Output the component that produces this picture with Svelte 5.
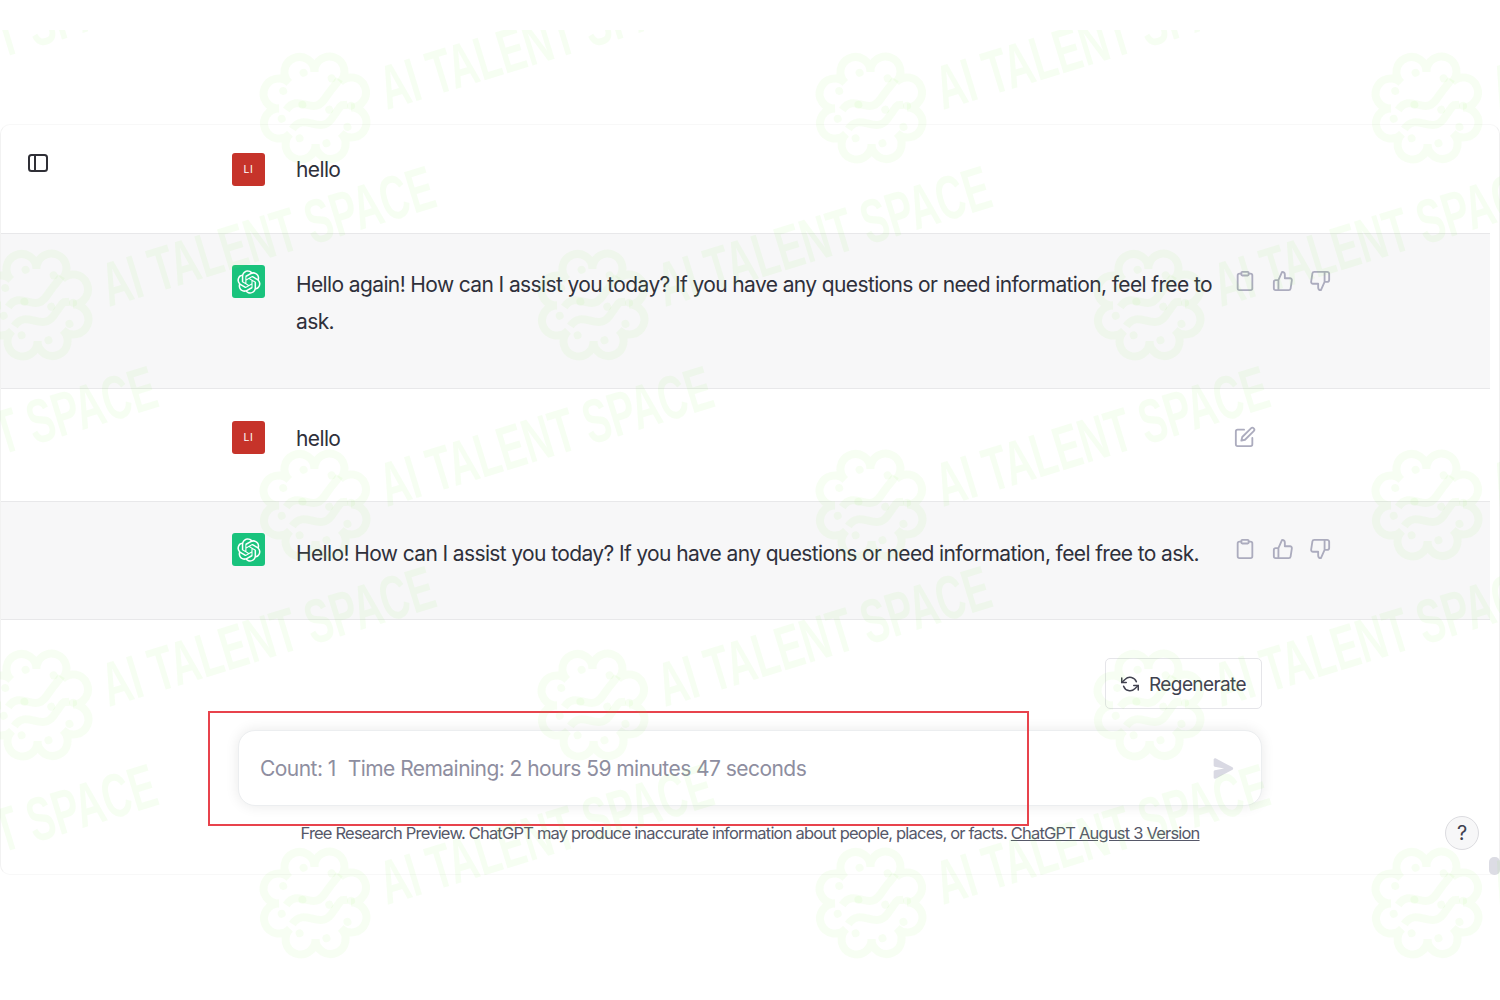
<script>
  const logo = "M37.5324 16.8707C37.9808 15.5241 38.1363 14.0974 37.9886 12.6859C37.8409 11.2744 37.3934 9.91076 36.676 8.68622C35.6126 6.83404 33.9882 5.3676 32.0373 4.4985C30.0864 3.62941 27.9098 3.40259 25.8215 3.85078C24.8796 2.7893 23.7219 1.94125 22.4257 1.36341C21.1295 0.785575 19.7249 0.491269 18.3058 0.500197C16.1708 0.495044 14.0893 1.16803 12.3614 2.42214C10.6335 3.67624 9.34853 5.44666 8.6917 7.47815C7.30085 7.76286 5.98686 8.3414 4.8377 9.17505C3.68854 10.0087 2.73073 11.0782 2.02839 12.312C0.956464 14.1591 0.498905 16.2988 0.721698 18.4228C0.944492 20.5467 1.83612 22.5449 3.268 24.1293C2.81966 25.4759 2.66413 26.9026 2.81182 28.3141C2.95951 29.7256 3.40701 31.0892 4.12437 32.3138C5.18791 34.1659 6.8123 35.6322 8.76321 36.5013C10.7141 37.3704 12.8907 37.5973 14.9789 37.1492C15.9208 38.2107 17.0786 39.0587 18.3747 39.6366C19.6709 40.2144 21.0755 40.5087 22.4946 40.4998C24.6307 40.5054 26.7133 39.8321 28.4418 38.5772C30.1704 37.3223 31.4556 35.5506 32.1119 33.5179C33.5027 33.2332 34.8167 32.6547 35.9659 31.821C37.115 30.9874 38.0728 29.9178 38.7752 28.684C39.8458 26.8371 40.3023 24.6979 40.0789 22.5748C39.8556 20.4517 38.9639 18.4544 37.5324 16.8707ZM22.4978 37.8849C20.7443 37.8874 19.0459 37.2733 17.6994 36.1501C17.7601 36.117 17.8666 36.0586 17.936 36.0161L25.9004 31.4156C26.1003 31.3019 26.2663 31.137 26.3813 30.9378C26.4964 30.7386 26.5563 30.5124 26.5549 30.2825V19.0542L29.9213 20.998C29.9389 21.0068 29.9541 21.0198 29.9656 21.0359C29.977 21.052 29.9842 21.0707 29.9867 21.0902V30.3889C29.9842 32.375 29.1946 34.2791 27.7909 35.6841C26.3872 37.0892 24.4838 37.8806 22.4978 37.8849ZM6.39227 31.0064C5.51397 29.4888 5.19742 27.7107 5.49804 25.9832C5.55718 26.0187 5.66048 26.0818 5.73461 26.1244L13.699 30.7248C13.8975 30.8408 14.1233 30.902 14.3532 30.902C14.583 30.902 14.8088 30.8408 15.0073 30.7248L24.731 25.1103V28.9979C24.7321 29.0177 24.7283 29.0376 24.7199 29.0556C24.7115 29.0736 24.6988 29.0893 24.6829 29.1012L16.6317 33.7497C14.9096 34.7416 12.8643 35.0097 10.9447 34.4954C9.02506 33.9811 7.38785 32.7263 6.39227 31.0064ZM4.29707 13.6194C5.17156 12.0998 6.55279 10.9364 8.19885 10.3327C8.19885 10.4013 8.19491 10.5228 8.19491 10.6071V19.808C8.19351 20.0378 8.25334 20.2638 8.36823 20.4629C8.48312 20.6619 8.64893 20.8267 8.84863 20.9404L18.5723 26.5542L15.206 28.4979C15.1894 28.5089 15.1703 28.5155 15.1505 28.5173C15.1307 28.5191 15.1107 28.516 15.0924 28.5082L7.04046 23.8557C5.32135 22.8601 4.06716 21.2235 3.55289 19.3046C3.03862 17.3858 3.30624 15.3413 4.29707 13.6194ZM31.955 20.0556L22.2312 14.4411L25.5976 12.4981C25.6142 12.4872 25.6333 12.4805 25.6531 12.4787C25.6729 12.4769 25.6928 12.4801 25.7111 12.4879L33.7631 17.1364C34.9967 17.849 36.0017 18.8982 36.6606 20.1613C37.3194 21.4244 37.6047 22.849 37.4832 24.2684C37.3617 25.6878 36.8382 27.0432 35.9743 28.1759C35.1103 29.3086 33.9415 30.1717 32.6047 30.6641C32.6047 30.5947 32.6047 30.4733 32.6047 30.3889V21.188C32.6066 20.9586 32.5474 20.7328 32.4332 20.5338C32.319 20.3348 32.154 20.1698 31.955 20.0556ZM35.3055 15.0128C35.2464 14.9765 35.1431 14.9142 35.069 14.8717L27.1045 10.2712C26.906 10.1554 26.6803 10.0943 26.4504 10.0943C26.2206 10.0943 25.9948 10.1554 25.7963 10.2712L16.0726 15.8858V11.9982C16.0715 11.9783 16.0753 11.9585 16.0837 11.9405C16.0921 11.9225 16.1048 11.9068 16.1207 11.8949L24.1719 7.25025C25.4053 6.53903 26.8158 6.19376 28.2383 6.25482C29.6608 6.31589 31.0364 6.78077 32.2044 7.59508C33.3723 8.40939 34.2842 9.53945 34.8334 10.8531C35.3826 12.1667 35.5464 13.6095 35.3055 15.0128ZM14.2424 21.9419L10.8752 19.9981C10.8576 19.9893 10.8423 19.9763 10.8309 19.9602C10.8195 19.9441 10.8122 19.9254 10.8098 19.9058V10.6071C10.8107 9.18295 11.2173 7.78848 11.9819 6.58696C12.7466 5.38544 13.8377 4.42659 15.1275 3.82264C16.4173 3.21869 17.8524 2.99464 19.2649 3.1767C20.6775 3.35876 22.0089 3.93941 23.1034 4.85067C23.0427 4.88379 22.937 4.94215 22.8668 4.98473L14.9024 9.58517C14.7025 9.69878 14.5366 9.86356 14.4215 10.0626C14.3065 10.2616 14.2466 10.4877 14.2479 10.7175L14.2424 21.9419ZM16.071 17.9991L20.4018 15.4978L24.7325 17.9975V22.9985L20.4018 25.4983L16.071 22.9985V17.9991Z";

  const messages = [
    { role: "user", text: "hello", cls: "first" },
    { role: "bot", text: "Hello again! How can I assist you today? If you have any questions or need information, feel free to ask.", cls: "second" },
    { role: "user", text: "hello", cls: "third", edit: true },
    { role: "bot", text: "Hello! How can I assist you today? If you have any questions or need information, feel free to ask.", cls: "fourth" }
  ];

  // watermark rows, one stamp every 556px
  const rows = [
    { y: 108, x: -241 },
    { y: 305, x: 37 },
    { y: 505, x: -241 },
    { y: 705, x: 37 },
    { y: 903, x: -241 }
  ];
  const stamps = rows.flatMap((r) =>
    [0, 1, 2, 3].map((i) => ({ x: r.x + i * 556, y: r.y }))
  );

  // lobed outline of the brain mark
  function lobes() {
    const n = 8;
    let d = "";
    for (let i = 0; i <= n; i++) {
      const a = (i / n) * Math.PI * 2 + 0.3;
      const x = (Math.cos(a) * 36).toFixed(1);
      const y = (Math.sin(a) * 36).toFixed(1);
      d += i === 0 ? `M${x} ${y}` : `A15 15 0 1 1 ${x} ${y}`;
    }
    return d + "Z";
  }
  const outline = lobes();
  const dots = [
    [-25, -26], [0, -37], [25, -23], [-35, 0], [-11, -7], [13, 6], [35, 9], [-24, 24], [0, 37], [25, 28]
  ];
</script>

<div class="page">
  <main class="panel">
    {#each messages as m}
      <section class="row {m.role} {m.cls}">
        <div class="inner">
          {#if m.role === "user"}
            <div class="avatar red">LI</div>
          {:else}
            <div class="avatar green">
              <svg viewBox="0 0 41 41" width="24" height="24"><path d={logo} fill="#fff" /></svg>
            </div>
          {/if}
          <p class="text">{m.text}</p>
          <div class="actions">
            {#if m.role === "bot"}
              <svg viewBox="0 0 24 24" class="ico"><path d="M16 4h2a2 2 0 0 1 2 2v14a2 2 0 0 1-2 2H6a2 2 0 0 1-2-2V6a2 2 0 0 1 2-2h2" /><rect x="8" y="2" width="8" height="4" rx="1" /></svg>
              <svg viewBox="0 0 24 24" class="ico"><path d="M14 9V5a3 3 0 0 0-3-3l-4 9v11h11.28a2 2 0 0 0 2-1.7l1.38-9a2 2 0 0 0-2-2.3zM7 22H4a2 2 0 0 1-2-2v-7a2 2 0 0 1 2-2h3" /></svg>
              <svg viewBox="0 0 24 24" class="ico"><path d="M10 15v4a3 3 0 0 0 3 3l4-9V2H5.72a2 2 0 0 0-2 1.7l-1.38 9a2 2 0 0 0 2 2.3zm7-13h2.67A2.31 2.31 0 0 1 22 4v7a2.31 2.31 0 0 1-2.33 2H17" /></svg>
            {:else if m.edit}
              <svg viewBox="0 0 24 24" class="ico"><path d="M11 4H4a2 2 0 0 0-2 2v14a2 2 0 0 0 2 2h14a2 2 0 0 0 2-2v-7" /><path d="M18.5 2.5a2.121 2.121 0 0 1 3 3L12 15l-4 1 1-4 9.5-9.5z" /></svg>
            {/if}
          </div>
        </div>
      </section>
    {/each}

    <div class="composer">
      <button class="regen">
        <svg viewBox="0 0 24 24" width="18" height="18"><polyline points="1 4 1 10 7 10" /><polyline points="23 20 23 14 17 14" /><path d="M20.49 9A9 9 0 0 0 5.64 5.64L1 10m22 4l-4.64 4.36A9 9 0 0 1 3.51 15" /></svg>
        <span>Regenerate</span>
      </button>
      <div class="input">
        <span class="count">Count: 1</span>
        <span>Time Remaining: 2 hours 59 minutes 47 seconds</span>
        <svg class="send" viewBox="0 0 16 16" width="21" height="21"><path d="M.5 1.163A1 1 0 0 1 1.97.28l12.868 6.837a1 1 0 0 1 0 1.766L1.969 15.72A1 1 0 0 1 .5 14.836V10.33a1 1 0 0 1 .816-.983L8.5 8 1.316 6.653A1 1 0 0 1 .5 5.67V1.163Z" /></svg>
      </div>
      <p class="note">Free Research Preview. ChatGPT may produce inaccurate information about people, places, or facts. <a href="#top">ChatGPT August 3 Version</a></p>
    </div>

    <button class="toggle" aria-label="Toggle sidebar">
      <svg viewBox="0 0 20 18" width="20" height="18"><rect x="1" y="1" width="18" height="16" rx="2.5" /><line x1="7" y1="1" x2="7" y2="17" /></svg>
    </button>
    <button class="help">?</button>
  </main>

  <div class="highlight"></div>
  <div class="thumb"></div>

  <svg class="marks" width="1500" height="970" viewBox="0 30 1500 970">
    {#each stamps as s}
      <g transform="translate({s.x} {s.y})">
        <g transform="rotate(-18)">
          <path d={outline} class="brain" />
          <path d="M-28 -7C-11 -20 -5 7 11 -5S28 -16 32 -20M-28 13C-11 0 -4 28 13 15S24 6 32 7" class="brain" />
          {#each dots as [cx, cy]}
            <circle {cx} {cy} r="4" class="dot" />
          {/each}
        </g>
        <text class="wm" x="72" y="2" textLength="345" lengthAdjust="spacingAndGlyphs" transform="rotate(-17 72 2)">AI TALENT SPACE</text>
      </g>
    {/each}
  </svg>
</div>

<style>
  :global(body) {
    margin: 0;
    background: #fff;
    overflow: hidden;
  }

  .page {
    position: relative;
    width: 1500px;
    height: 1000px;
    padding-top: 124px;
    box-sizing: border-box;
    font-family: Inter, "Liberation Sans", sans-serif;
    color: #2f303b;
  }

  .panel {
    position: relative;
    height: 751px;
    box-sizing: border-box;
    border: 1px solid #f8f8f8;
    border-left-color: #f2f2f2;
    border-right-color: #f0f0f0;
    border-radius: 10px;
    background: #fff;
  }

  .row {
    width: 1489px;
    box-sizing: border-box;
    border-bottom: 1px solid #e8e8ea;
  }

  .row.bot {
    background: #f7f7f8;
  }

  .first { height: 109px; padding-top: 28px; }
  .second { height: 155px; padding-top: 31px; }
  .third { height: 113px; padding-top: 32px; }
  .fourth { height: 118px; padding-top: 31px; }

  .first .text { margin-top: -2px; }
  .second .text { margin-top: 1px; }
  .third .text { margin-top: -1px; }
  .fourth .text { margin-top: 2px; }

  .inner {
    display: flex;
    align-items: flex-start;
    margin-left: 231px;
  }

  .avatar {
    flex: none;
    width: 33px;
    height: 33px;
    display: flex;
    align-items: center;
    justify-content: center;
    border-radius: 3px;
    color: #fff;
    font-size: 10.5px;
    letter-spacing: 0.5px;
  }

  .red { background: #c6332a; }
  .green { background: #19c37d; }

  .text {
    width: 939px;
    flex: none;
    margin: 0 0 0 31px;
    font-size: 21px;
    line-height: 37px;
    letter-spacing: -0.62px;
  }

  .actions {
    display: flex;
    gap: 15.5px;
    margin-left: -1px;
    padding-top: 5px;
  }

  .ico {
    width: 22px;
    height: 22px;
    fill: none;
    stroke: #acacbe;
    stroke-width: 2;
    stroke-linecap: round;
    stroke-linejoin: round;
  }

  .composer {
    display: flex;
    flex-direction: column;
    align-items: flex-end;
    width: 1024px;
    margin-left: 237px;
    padding-top: 38px;
  }

  .regen {
    display: flex;
    align-items: center;
    gap: 10px;
    width: 157px;
    height: 51px;
    padding: 0 0 0 15px;
    box-sizing: border-box;
    background: #fff;
    border: 1px solid #e5e5e9;
    border-radius: 5px;
    color: #40414f;
    font: 19px Inter, "Liberation Sans", sans-serif;
    letter-spacing: -0.6px;
  }

  .regen span {
    padding-top: 2px;
  }

  .regen svg {
    fill: none;
    stroke: #40414f;
    stroke-width: 2;
    stroke-linecap: round;
    stroke-linejoin: round;
  }

  .input {
    display: flex;
    align-items: center;
    width: 100%;
    height: 76px;
    margin-top: 21px;
    padding: 1px 27px 0 21px;
    box-sizing: border-box;
    background: #fff;
    border: 1px solid #eceef0;
    border-radius: 17px;
    box-shadow: 0 0 14px rgba(0, 0, 0, 0.09);
    color: #8e8ea0;
    font-size: 21px;
    letter-spacing: -0.55px;
  }

  .count {
    margin-right: 12px;
  }

  .send {
    margin-left: auto;
    fill: #d9d9e3;
  }

  .note {
    align-self: center;
    margin: 17px 0 0;
    color: #565869;
    font-size: 16.5px;
    line-height: 20px;
    letter-spacing: -0.8px;
    white-space: nowrap;
  }

  .note a {
    color: inherit;
  }

  .toggle {
    position: absolute;
    left: 27px;
    top: 29px;
    padding: 0;
    border: 0;
    background: none;
    line-height: 0;
  }

  .toggle svg {
    fill: none;
    stroke: #2f2f36;
    stroke-width: 2;
  }

  .help {
    position: absolute;
    left: 1444px;
    top: 691px;
    width: 34px;
    height: 34px;
    padding: 0;
    border: 1px solid #dcdce0;
    border-radius: 50%;
    background: #f7f7f8;
    color: #40414f;
    font: 20px Inter, "Liberation Sans", sans-serif;
  }

  .highlight {
    position: absolute;
    left: 208px;
    top: 711px;
    width: 821px;
    height: 115px;
    box-sizing: border-box;
    border: 2px solid #e8434c;
  }

  .thumb {
    position: absolute;
    left: 1489px;
    top: 857px;
    width: 11px;
    height: 18px;
    border-radius: 5px;
    background: #dcdce4;
  }

  .marks {
    position: absolute;
    left: 0;
    top: 30px;
    pointer-events: none;
  }

  .brain {
    fill: none;
    stroke: rgba(130, 240, 70, 0.065);
    stroke-width: 8;
  }

  .dot {
    fill: rgba(130, 240, 70, 0.065);
  }

  .wm {
    fill: rgba(130, 240, 70, 0.07);
    font-family: "Liberation Sans Narrow", "Liberation Sans", sans-serif;
    font-size: 62px;
    font-weight: 700;
  }
</style>
